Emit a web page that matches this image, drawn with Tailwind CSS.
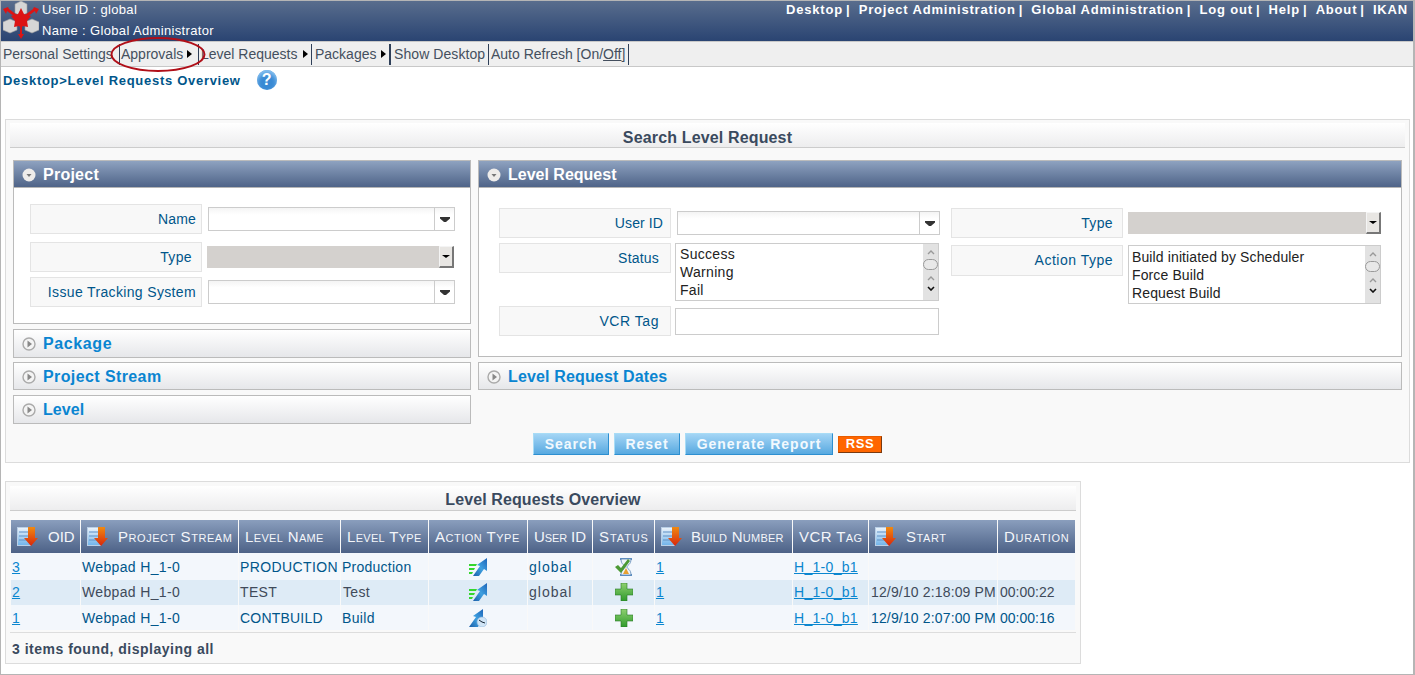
<!doctype html>
<html lang="en">
    <head>
        <meta charset="UTF-8" />
        <title>Level Requests Overview</title>
        <script src="https://cdn.jsdelivr.net/npm/@tailwindcss/browser@4"></script>
    </head>
    <body class="bg-white">
        <!-- shared icons -->
        <svg width="0" height="0" class="absolute">
            <defs>
                <linearGradient id="docFill" x1="0" y1="0" x2="0" y2="1">
                    <stop offset="0" stop-color="#eef4fb" />
                    <stop offset="1" stop-color="#6fb3ea" />
                </linearGradient>
                <linearGradient id="arrowFill" x1="0" y1="0" x2="0" y2="1">
                    <stop offset="0" stop-color="#f08a10" />
                    <stop offset="1" stop-color="#d8260c" />
                </linearGradient>
                <linearGradient id="blueFill" x1="0" y1="1" x2="1" y2="0">
                    <stop offset="0" stop-color="#1a5ea8" />
                    <stop offset="0.5" stop-color="#3fa0e0" />
                    <stop offset="1" stop-color="#1c64b8" />
                </linearGradient>
                <linearGradient id="greenFill" x1="0" y1="0" x2="0" y2="1">
                    <stop offset="0" stop-color="#8fd070" />
                    <stop offset="1" stop-color="#2f9a2c" />
                </linearGradient>
                <symbol id="sort" viewBox="0 0 21 19">
                    <rect x="0.5" y="0.5" width="13" height="18" fill="url(#docFill)" stroke="#b9cfe6" />
                    <path d="M2 5h10M2 9h10M2 13h10" stroke="#5c8fc4" />
                    <path d="M11 0h7v11h3l-7 8-7-8h4z" fill="url(#arrowFill)" />
                </symbol>
                <symbol id="run" viewBox="0 0 18 18">
                    <path d="M0 6h8l-1 2H0zM0 10h6l-1 2H0zM0 14h4l-1 2H0z" fill="#35d62e" />
                    <path d="M4 18l7-10-3-1 10-7v13l-3-2-5 7z" fill="url(#blueFill)" />
                </symbol>
                <symbol id="plus" viewBox="0 0 18 18">
                    <path d="M6 0h6v6h6v6h-6v6H6v-6H0V6h6z" fill="url(#greenFill)" stroke="#2a7a2a" stroke-width="0.6" />
                </symbol>
                <symbol id="wait" viewBox="0 0 18 18">
                    <path d="M5 1h12M5 17h12" stroke="#2f6fb0" stroke-width="1.5" />
                    <path d="M6 1c0 6 4 6 4 8s-4 2-4 8h10c0-6-4-6-4-8s4-2 4-8z" fill="#eef3f8" stroke="#5a86b5" stroke-width="0.8" />
                    <path d="M11 10l-3 6h6z" fill="#e8a030" />
                    <path d="M0 9l3-2 3 3 7-9 2 2-9 12z" fill="#4c9a35" />
                </symbol>
                <symbol id="sched" viewBox="0 0 18 18">
                    <path d="M0 18l7-10-3-1 10-7v10l-5 8z" fill="url(#blueFill)" />
                    <circle cx="13" cy="13" r="5" fill="#cfe4f6" stroke="#8fb7dc" stroke-width="0.6" />
                    <path d="M10 11l3 2 3 1" stroke="#123" fill="none" />
                </symbol>
                <symbol id="open" viewBox="0 0 14 14">
                    <circle cx="7" cy="7" r="6.5" fill="#eeecea" />
                    <path d="M4.5 6h5L7 9z" fill="#777" />
                </symbol>
                <symbol id="closed" viewBox="0 0 14 14">
                    <circle cx="7" cy="7" r="6" fill="#f4f4f4" stroke="#aaa" stroke-width="1.4" />
                    <path d="M5.5 3.5v7L10 7z" fill="#888" />
                </symbol>
                <symbol id="combo" viewBox="0 0 10 5">
                    <path d="M0 0h10v1.5L6 5H4L0 1.5z" fill="#333" />
                </symbol>
                <symbol id="up" viewBox="0 0 8 5">
                    <path d="M1 4l3-3 3 3" stroke="#999" stroke-width="1.4" fill="none" />
                </symbol>
                <symbol id="down" viewBox="0 0 8 5">
                    <path d="M1 1l3 3 3-3" stroke="#111" stroke-width="1.6" fill="none" />
                </symbol>
            </defs>
        </svg>

        <div class="relative h-[675px] overflow-hidden border border-[#b5b5b5] border-r-2 border-r-[#b5b5b5] font-['Liberation_Sans',Arial,sans-serif] text-[14px] text-[#00568a]">
            <!-- header -->
            <header class="flex h-[40px] justify-between bg-gradient-to-b from-[#596d8d] to-[#2a4472] text-white">
                <div class="flex">
                    <svg class="ml-[2px] h-[39px] w-[36px]" viewBox="0 0 36 39">
                        <g fill="#d6d6d6" stroke="#a0a0a0" stroke-width="0.6">
                            <path d="M12 3l6-3 6 3v9l-6 3-6-3z" />
                            <path d="M0 21l7-3 7 3v8l-7 3-7-3z" />
                            <path d="M22 21l7-3 7 3v8l-7 3-7-3z" />
                        </g>
                        <g fill="#dc1414">
                            <path d="M18 7l3 6 7 2-4 5 1 6-5-1-2 2-2-2-5 1 1-6-4-5 7-2z" />
                            <path d="M0 8l5-2 1 2 8 6-2 2-8-6-1 3zM36 8l-5-2-1 2-8 6 2 2 8-6 1 3zM17 24h2v9h2l-3 5-3-5h2z" />
                        </g>
                    </svg>
                    <div class="ml-[3px] flex flex-col gap-[5px] pt-[1px] text-[13px] leading-[16px] tracking-[0.35px]">
                        <span>User ID : global</span>
                        <span>Name : Global Administrator</span>
                    </div>
                </div>
                <nav class="flex gap-[8.2px] pr-[5px] pt-[1px] text-[13px] font-bold leading-[16px] tracking-[0.82px]">
                    <span>Desktop<span class="ml-[3px]">|</span></span>
                    <span>Project Administration<span class="ml-[3px]">|</span></span>
                    <span>Global Administration<span class="ml-[3px]">|</span></span>
                    <span>Log out<span class="ml-[3px]">|</span></span>
                    <span>Help<span class="ml-[3px]">|</span></span>
                    <span>About<span class="ml-[3px]">|</span></span>
                    <span>IKAN</span>
                </nav>
            </header>

            <!-- menu -->
            <div class="flex h-[26px] items-center border-y border-[#c8c8c8] bg-[#efefef] pl-[2px] text-[14px] text-[#444f5e]">
                <span class="w-[116px]">Personal Settings</span>
                <span class="flex h-[21px] w-[80px] items-center gap-[4px] border-x border-[#2f3f58] pl-[1px]">Approvals<i class="h-0 w-0 border-y-[4px] border-l-[5px] border-y-transparent border-l-black"></i></span>
                <span class="flex h-[21px] w-[113px] items-center gap-[5px] border-r border-[#2f3f58] pl-[2px]">Level Requests<i class="h-0 w-0 border-y-[4px] border-l-[5px] border-y-transparent border-l-black"></i></span>
                <span class="flex h-[21px] w-[79px] items-center gap-[5px] border-r-2 border-[#2f3f58] pl-[3px]">Packages<i class="h-0 w-0 border-y-[4px] border-l-[5px] border-y-transparent border-l-black"></i></span>
                <span class="flex h-[21px] w-[98px] items-center border-r border-[#2f3f58] pl-[3px] tracking-[0.08px]">Show Desktop</span>
                <span class="flex h-[21px] w-[140px] items-center border-r border-[#2f3f58] pl-[2px]">Auto Refresh [On/<u>Off</u>]</span>
            </div>

            <!-- breadcrumb -->
            <div class="flex h-[52px] items-start pl-[2px] pt-[3px]">
                <span class="text-[13px] font-bold leading-[22px] tracking-[0.71px]">Desktop&gt;Level Requests Overview</span>
                <span class="ml-[16px] flex h-[20px] w-[20px] items-center justify-center rounded-full bg-[#3a8ad4] text-[16px] font-bold leading-none text-white shadow-[inset_0_3px_4px_#8cc4f2]">?</span>
            </div>

            <!-- search panel -->
            <section class="ml-[4px] h-[344px] w-[1405px] border border-[#dcdcdc] bg-[#f9f9f9] px-[4px] pt-[3px]">
                <h2 class="flex h-[25px] items-center justify-center border-b border-[#cccccc] bg-gradient-to-b from-white to-[#ededee] pt-[5px] text-[16px] font-bold tracking-[0.15px] text-[#3a4a5e]">Search Level Request</h2>
                <div class="ml-[3px] mt-[12px] flex gap-[7px]">
                    <!-- left column -->
                    <div class="flex w-[458px] flex-col">
                        <div class="h-[164px] border border-[#bbbbbb] bg-white">
                            <div class="flex h-[27px] items-center gap-[7px] border-b border-[#b5b5b5] bg-gradient-to-b from-[#8ea2c0] to-[#4f6488] pl-[8px] pt-[1px] text-[16px] font-bold tracking-[0.25px] text-white">
                                <svg class="h-[14px] w-[14px]"><use href="#open" /></svg>Project
                            </div>
                            <div class="flex flex-col pl-[16px] pt-[16px]">
                                <div class="flex items-center gap-[6px]">
                                    <div class="flex h-[30px] w-[172px] items-center justify-end border border-[#e4e4e4] bg-[#f8f8f8] pr-[5px] tracking-[0.15px]">Name</div>
                                    <div class="flex h-[24px] w-[247px] justify-end border border-[#cccccc] bg-gradient-to-b from-[#f4f4f4] to-white to-30%">
                                        <div class="flex w-[20px] items-center justify-center border-l border-[#cccccc]"><svg class="h-[5px] w-[10px]"><use href="#combo" /></svg></div>
                                    </div>
                                </div>
                                <div class="mt-[8px] flex items-center gap-[5px]">
                                    <div class="flex h-[30px] w-[172px] items-center justify-end border border-[#e4e4e4] bg-[#f8f8f8] pr-[9px] tracking-[0.35px]">Type</div>
                                    <div class="flex h-[22px] w-[247px] justify-end bg-[#d4d1ce]">
                                        <div class="flex w-[15px] items-center justify-center border border-r-2 border-b-2 border-[#f4f4f4] border-r-[#777777] border-b-[#777777] bg-[#e8e6e3]"><i class="h-0 w-0 border-x-[4px] border-t-[3px] border-x-transparent border-t-black"></i></div>
                                    </div>
                                </div>
                                <div class="mt-[5px] flex items-center gap-[6px]">
                                    <div class="flex h-[30px] w-[172px] items-center justify-end border border-[#e4e4e4] bg-[#f8f8f8] pr-[5px] tracking-[0.35px]">Issue Tracking System</div>
                                    <div class="flex h-[24px] w-[247px] justify-end border border-[#cccccc] bg-gradient-to-b from-[#f4f4f4] to-white to-30%">
                                        <div class="flex w-[20px] items-center justify-center border-l border-[#cccccc]"><svg class="h-[5px] w-[10px]"><use href="#combo" /></svg></div>
                                    </div>
                                </div>
                            </div>
                        </div>
                        <div class="mt-[5px] flex h-[29px] items-center gap-[7px] border border-[#bbbbbb] bg-gradient-to-b from-white to-[#e6e7ea] pl-[8px] text-[16px] font-bold tracking-[0.6px] text-[#0a85d1]">
                            <svg class="h-[14px] w-[14px]"><use href="#closed" /></svg>Package
                        </div>
                        <div class="mt-[4px] flex h-[28px] items-center gap-[7px] border border-[#bbbbbb] bg-gradient-to-b from-white to-[#e6e7ea] pl-[8px] pt-[1px] text-[16px] font-bold tracking-[0.4px] text-[#0a85d1]">
                            <svg class="h-[14px] w-[14px]"><use href="#closed" /></svg>Project Stream
                        </div>
                        <div class="mt-[5px] flex h-[29px] items-center gap-[7px] border border-[#bbbbbb] bg-gradient-to-b from-white to-[#e6e7ea] pl-[8px] text-[16px] font-bold tracking-[0.1px] text-[#0a85d1]">
                            <svg class="h-[14px] w-[14px]"><use href="#closed" /></svg>Level
                        </div>
                    </div>

                    <!-- right column -->
                    <div class="flex w-[924px] flex-col">
                        <div class="h-[197px] border border-[#bbbbbb] bg-white">
                            <div class="flex h-[27px] items-center gap-[7px] border-b border-[#b5b5b5] bg-gradient-to-b from-[#8ea2c0] to-[#4f6488] pl-[8px] pt-[1px] text-[16px] font-bold text-white">
                                <svg class="h-[14px] w-[14px]"><use href="#open" /></svg>Level Request
                            </div>
                            <div class="flex pl-[20px] pt-[20px]">
                                <div class="flex w-[452px] flex-col">
                                    <div class="flex items-center gap-[6px]">
                                        <div class="flex h-[30px] w-[172px] items-center justify-end border border-[#e4e4e4] bg-[#f8f8f8] pr-[7px] tracking-[0.1px]">User ID</div>
                                        <div class="flex h-[24px] w-[263px] justify-end border border-[#cccccc] bg-gradient-to-b from-[#f4f4f4] to-white to-30%">
                                            <div class="flex w-[20px] items-center justify-center border-l border-[#cccccc]"><svg class="h-[5px] w-[10px]"><use href="#combo" /></svg></div>
                                        </div>
                                    </div>
                                    <div class="mt-[5px] flex items-start gap-[4px]">
                                        <div class="flex h-[30px] w-[172px] items-center justify-end border border-[#e4e4e4] bg-[#f8f8f8] pr-[11px] tracking-[0.2px]">Status</div>
                                        <div class="flex h-[58px] w-[264px] justify-between border border-[#cccccc] bg-white">
                                            <div class="flex flex-col pl-[4px] pt-[1px] leading-[18px] tracking-[0.3px] text-[#222222]">
                                                <span>Success</span>
                                                <span>Warning</span>
                                                <span>Fail</span>
                                            </div>
                                            <div class="flex w-[15px] flex-col items-center bg-[#e2e2e2] pt-[6px]">
                                                <svg class="h-[5px] w-[8px]"><use href="#up" /></svg>
                                                <i class="mt-[4px] h-[11px] w-[15px] rounded-full border border-[#9a9a9a] bg-[#e8e8e8]"></i>
                                                <svg class="mt-[6px] h-[5px] w-[8px]"><use href="#up" /></svg>
                                                <svg class="mt-[5px] h-[5px] w-[8px]"><use href="#down" /></svg>
                                            </div>
                                        </div>
                                    </div>
                                    <div class="mt-[5px] flex items-center gap-[4px]">
                                        <div class="flex h-[30px] w-[172px] items-center justify-end border border-[#e4e4e4] bg-[#f8f8f8] pr-[11px] tracking-[0.55px]">VCR Tag</div>
                                        <div class="h-[27px] w-[264px] border border-[#cccccc] bg-white"></div>
                                    </div>
                                </div>
                                <div class="flex flex-col">
                                    <div class="flex items-center gap-[5px]">
                                        <div class="flex h-[30px] w-[172px] items-center justify-end border border-[#e4e4e4] bg-[#f8f8f8] pr-[9px] tracking-[0.35px]">Type</div>
                                        <div class="flex h-[22px] w-[253px] justify-end bg-[#d4d1ce]">
                                            <div class="flex w-[15px] items-center justify-center border border-r-2 border-b-2 border-[#f4f4f4] border-r-[#777777] border-b-[#777777] bg-[#e8e6e3]"><i class="h-0 w-0 border-x-[4px] border-t-[3px] border-x-transparent border-t-black"></i></div>
                                        </div>
                                    </div>
                                    <div class="mt-[7px] flex items-start gap-[5px]">
                                        <div class="flex h-[31px] w-[172px] items-center justify-end border border-[#e4e4e4] bg-[#f8f8f8] pr-[9px] tracking-[0.5px]">Action Type</div>
                                        <div class="flex h-[59px] w-[253px] justify-between border border-[#cccccc] bg-white">
                                            <div class="flex flex-col pl-[3px] pt-[2px] leading-[18px] tracking-[0.12px] text-[#222222]">
                                                <span>Build initiated by Scheduler</span>
                                                <span>Force Build</span>
                                                <span>Request Build</span>
                                            </div>
                                            <div class="flex w-[15px] flex-col items-center bg-[#e2e2e2] pt-[6px]">
                                                <svg class="h-[5px] w-[8px]"><use href="#up" /></svg>
                                                <i class="mt-[4px] h-[11px] w-[15px] rounded-full border border-[#9a9a9a] bg-[#e8e8e8]"></i>
                                                <svg class="mt-[6px] h-[5px] w-[8px]"><use href="#up" /></svg>
                                                <svg class="mt-[5px] h-[5px] w-[8px]"><use href="#down" /></svg>
                                            </div>
                                        </div>
                                    </div>
                                </div>
                            </div>
                        </div>
                        <div class="mt-[5px] flex h-[28px] items-center gap-[7px] border border-[#bbbbbb] bg-gradient-to-b from-white to-[#e6e7ea] pl-[8px] pt-[1px] text-[16px] font-bold tracking-[0.15px] text-[#0a85d1]">
                            <svg class="h-[14px] w-[14px]"><use href="#closed" /></svg>Level Request Dates
                        </div>
                    </div>
                </div>
                <!-- buttons -->
                <div class="ml-[523px] mt-[9px] flex items-center gap-[5px] text-[14px] font-bold tracking-[1px] text-[#f2f9fe]">
                    <span class="flex h-[22px] w-[76px] items-center justify-center border border-[#a8dcf6] border-r-[#2d8fd0] border-b-[#2d8fd0] bg-gradient-to-b from-[#a3d5f5] to-[#57a9e0]">Search</span>
                    <span class="flex h-[22px] w-[66px] items-center justify-center border border-[#a8dcf6] border-r-[#2d8fd0] border-b-[#2d8fd0] bg-gradient-to-b from-[#a3d5f5] to-[#57a9e0]">Reset</span>
                    <span class="flex h-[22px] w-[148px] items-center justify-center border border-[#a8dcf6] border-r-[#2d8fd0] border-b-[#2d8fd0] bg-gradient-to-b from-[#a3d5f5] to-[#57a9e0]">Generate Report</span>
                    <span class="flex h-[17px] w-[44px] items-center justify-center border border-[#e85c00] border-r-[#7a3a10] border-b-[#7a3a10] bg-[#ff6600] text-[13px] tracking-[0.6px] text-white">RSS</span>
                </div>
            </section>

            <!-- overview panel -->
            <section class="ml-[4px] mt-[18px] h-[183px] w-[1076px] border border-[#dcdcdc] bg-[#f9f9f9] px-[4px] pt-[4px]">
                <h2 class="flex h-[25px] items-center justify-center border-b border-[#cccccc] bg-gradient-to-b from-white to-[#ededee] pt-[4px] text-[16px] font-bold tracking-[0.1px] text-[#3a4a5e]">Level Requests Overview</h2>
                <table class="mt-[9px] w-[1066px] table-fixed border-separate border-spacing-x-[1px] border-spacing-y-0 leading-[16px] tracking-[0.35px]">
                    <colgroup>
                        <col class="w-[69px]" /><col class="w-[157px]" /><col class="w-[101px]" /><col class="w-[87px]" /><col class="w-[98px]" /><col class="w-[64px]" /><col class="w-[61px]" /><col class="w-[137px]" /><col class="w-[75px]" /><col class="w-[128px]" /><col class="w-[77px]" />
                    </colgroup>
                    <thead>
                        <tr class="h-[33px] whitespace-nowrap text-left text-[15px] tracking-[0.55px] text-[#f4f6fa] [font-variant:small-caps]">
                            <th class="bg-gradient-to-b from-[#8a9ebd] to-[#4d6287] font-normal tracking-[0px]"><span class="flex items-center gap-[10px] pl-[6px]"><svg class="h-[19px] w-[21px]"><use href="#sort" /></svg>OID</span></th>
                            <th class="bg-gradient-to-b from-[#8a9ebd] to-[#4d6287] font-normal"><span class="flex items-center gap-[10px] pl-[6px]"><svg class="h-[19px] w-[21px]"><use href="#sort" /></svg>Project Stream</span></th>
                            <th class="bg-gradient-to-b from-[#8a9ebd] to-[#4d6287] pl-[6px] font-normal tracking-[0.35px]">Level Name</th>
                            <th class="bg-gradient-to-b from-[#8a9ebd] to-[#4d6287] pl-[6px] font-normal tracking-[0.3px]">Level Type</th>
                            <th class="bg-gradient-to-b from-[#8a9ebd] to-[#4d6287] pl-[6px] font-normal tracking-[0.5px]">Action Type</th>
                            <th class="bg-gradient-to-b from-[#8a9ebd] to-[#4d6287] pl-[6px] font-normal tracking-[-0.1px]">User ID</th>
                            <th class="bg-gradient-to-b from-[#8a9ebd] to-[#4d6287] pl-[6px] font-normal tracking-[0.9px]">Status</th>
                            <th class="bg-gradient-to-b from-[#8a9ebd] to-[#4d6287] font-normal tracking-[0.25px]"><span class="flex items-center gap-[9px] pl-[6px]"><svg class="h-[19px] w-[21px]"><use href="#sort" /></svg>Build Number</span></th>
                            <th class="bg-gradient-to-b from-[#8a9ebd] to-[#4d6287] pl-[6px] font-normal tracking-[0.4px]">VCR Tag</th>
                            <th class="bg-gradient-to-b from-[#8a9ebd] to-[#4d6287] font-normal"><span class="flex items-center gap-[10px] pl-[6px]"><svg class="h-[19px] w-[21px]"><use href="#sort" /></svg>Start</span></th>
                            <th class="bg-gradient-to-b from-[#8a9ebd] to-[#4d6287] pl-[6px] font-normal tracking-[0.75px]">Duration</th>
                        </tr>
                    </thead>
                    <tbody>
                        <tr class="h-[27px] bg-[#f3f7fc]">
                            <td class="pl-[1px]"><a class="text-[#0a86cf] underline">3</a></td>
                            <td class="pl-[1px]">Webpad H_1-0</td>
                            <td class="whitespace-nowrap pl-[1px] tracking-[0.4px]">PRODUCTION</td>
                            <td class="pl-[1px] tracking-[0.25px]">Production</td>
                            <td><svg class="mx-auto h-[18px] w-[18px]"><use href="#run" /></svg></td>
                            <td class="pl-[1px] tracking-[1px]">global</td>
                            <td><svg class="mx-auto h-[18px] w-[18px]"><use href="#wait" /></svg></td>
                            <td class="pl-[1px]"><a class="text-[#0a86cf] underline">1</a></td>
                            <td class="pl-[1px]"><a class="tracking-[0.3px] text-[#0a86cf] underline">H_1-0_b1</a></td>
                            <td></td>
                            <td></td>
                        </tr>
                        <tr class="h-[25px] bg-[#deebf6] text-[#3f4a5a] [&>td]:pb-[1px]">
                            <td class="pl-[1px]"><a class="text-[#0a86cf] underline">2</a></td>
                            <td class="pl-[1px]">Webpad H_1-0</td>
                            <td class="pl-[1px]">TEST</td>
                            <td class="pl-[2px]">Test</td>
                            <td><svg class="mx-auto h-[18px] w-[18px]"><use href="#run" /></svg></td>
                            <td class="pl-[1px] tracking-[1px]">global</td>
                            <td><svg class="mx-auto h-[18px] w-[18px]"><use href="#plus" /></svg></td>
                            <td class="pl-[1px]"><a class="text-[#0a86cf] underline">1</a></td>
                            <td class="pl-[1px]"><a class="tracking-[0.3px] text-[#0a86cf] underline">H_1-0_b1</a></td>
                            <td class="whitespace-nowrap pl-[2px] tracking-[0.15px]">12/9/10 2:18:09 PM</td>
                            <td class="pl-[2px] tracking-[0px]">00:00:22</td>
                        </tr>
                        <tr class="h-[25px] bg-[#f3f7fc]">
                            <td class="pl-[1px]"><a class="text-[#0a86cf] underline">1</a></td>
                            <td class="pl-[1px]">Webpad H_1-0</td>
                            <td class="pl-[1px] tracking-[0.2px]">CONTBUILD</td>
                            <td class="pl-[1px]">Build</td>
                            <td><svg class="mx-auto h-[18px] w-[18px]"><use href="#sched" /></svg></td>
                            <td></td>
                            <td><svg class="mx-auto h-[18px] w-[18px]"><use href="#plus" /></svg></td>
                            <td class="pl-[1px]"><a class="text-[#0a86cf] underline">1</a></td>
                            <td class="pl-[1px]"><a class="tracking-[0.3px] text-[#0a86cf] underline">H_1-0_b1</a></td>
                            <td class="whitespace-nowrap pl-[2px] tracking-[0.15px]">12/9/10 2:07:00 PM</td>
                            <td class="pl-[2px] tracking-[0px]">00:00:16</td>
                        </tr>
                    </tbody>
                </table>
                <div class="mt-[2px] flex h-[30px] items-center border-t border-[#dddddd] pl-[2px] pt-[4px] font-bold tracking-[0.5px] text-[#3a4a5e]">3 items found, displaying all</div>
            </section>

            <!-- hand drawn highlight round the Approvals item -->
            <svg class="absolute left-[109px] top-[35px] h-[37px] w-[97px]" viewBox="0 0 97 37">
                <ellipse cx="48" cy="18.5" rx="46.5" ry="16.5" fill="none" stroke="#b00f18" stroke-width="2" />
            </svg>
        </div>
    </body>
</html>
